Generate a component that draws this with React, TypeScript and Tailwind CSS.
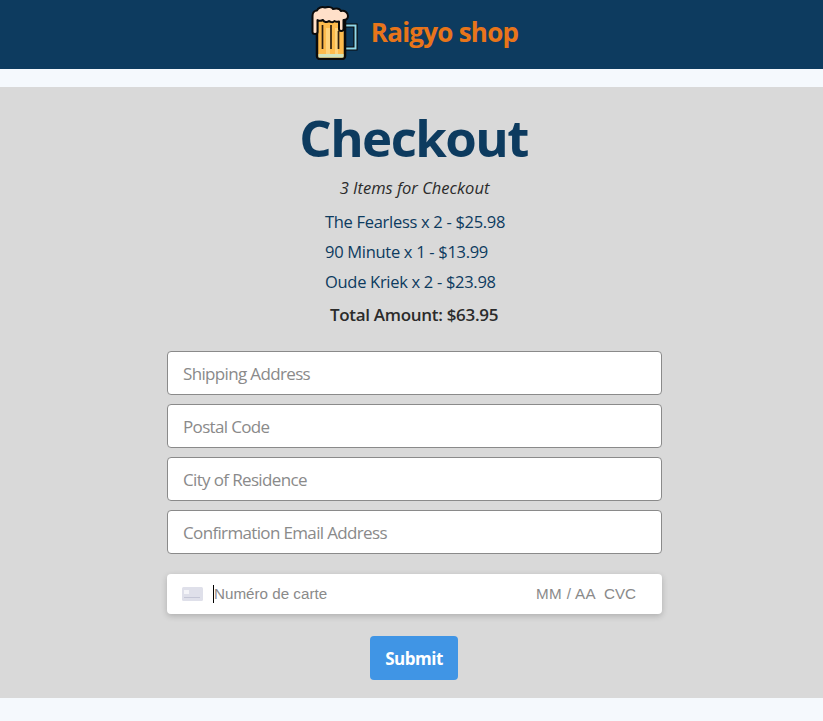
export default function App() {
  const font = "font-['Open_Sans',sans-serif]";
  const fields = ["Shipping Address", "Postal Code", "City of Residence", "Confirmation Email Address"];
  return (
    <div className={`min-h-[721px] bg-[#f5f9fd] ${font}`}>
      <header className="flex h-[69px] items-center justify-center gap-[12px] bg-[#0d3b5f] pl-[6px]">
        <svg width="48" height="54" viewBox="0 0 48 54" className="mt-[-8px] mb-[-4px] shrink-0">
          <path d="M33 19.500h11.500v23H33" fill="none" stroke="#0b0b0b" strokeWidth="4.200" />
          <path d="M33 19.500h11.500v23H33" fill="none" stroke="#8fd8ea" strokeWidth="2" />
          <path d="M6 12h28v38a3 3 0 0 1-3 3H9a3 3 0 0 1-3-3z" fill="#fdbb4d" stroke="#0b0b0b" strokeWidth="2.5" />
          <path d="M15 22h4v26h-4zM24 22h3v26h-3z" fill="#ffd27a" />
          <rect x="7.500" y="48" width="25" height="3.500" fill="#cfe3c0" />
          <path d="M11.500 19v24M20 19v24M27.500 25v18" stroke="#2e1f10" strokeWidth="1.7" />
          <path d="M1.500 26V10C1.500 6 4 4.500 6 4.500C7 1.500 11 .5 14 1.500C17 .5 21 1 22 3C26 2 29 3 30 5C34 4 37 7 37 10C37 13 35 14 32.500 14V23C32.500 25.500 28 25.500 28 23V15.500C26 16 24.500 16 23.500 15C22 17 19 16 18 15C16 17 13 16 12 14C10 15 8 15 6.500 14V26C6.500 28.500 1.500 28.500 1.500 26Z" fill="#ffe0c9" stroke="#0b0b0b" strokeWidth="2" strokeLinejoin="round" />
        </svg>
        <span className="mb-[5px] text-[26px] font-bold tracking-[-0.75px] text-[#e8751a]">Raigyo shop</span>
      </header>
      <main className="mt-[18px] flex h-[611px] flex-col items-center bg-[#d9d9d9] pl-[6px]">
        <h1 className="mt-[16px] mr-[2px] text-[51px] leading-[68px] font-bold tracking-[-1.6px] text-[#0d3b5f]">Checkout</h1>
        <p className="mt-[3px] text-[16.5px] leading-[28px] text-[#2b2b2b] italic">3 Items for Checkout</p>
        <ul className="mt-[5px] w-[179px] text-[16.5px] leading-[30px] tracking-[-0.3px] whitespace-nowrap text-[#0d3b5f]">
          <li>The Fearless x 2 - $25.98</li>
          <li>90 Minute x 1 - $13.99</li>
          <li>Oude Kriek x 2 - $23.98</li>
        </ul>
        <p className="mt-[4px] mr-[1px] text-[17px] leading-[28px] font-semibold tracking-[-0.3px] text-[#2b2b2b]">Total Amount: $63.95</p>
        <form className="mt-[22px] flex w-[495px] flex-col items-center" onSubmit={(e) => e.preventDefault()}>
          <div className="flex w-full flex-col gap-[9px]">
            {fields.map((f) => (
              <input
                key={f}
                placeholder={f}
                className="h-[44px] w-full rounded-[4px] border border-[#8a8a8a] bg-white px-[15px] text-[17px] tracking-[-0.65px] outline-none placeholder:text-[#8a8a8a]"
              />
            ))}
          </div>
          <div className="mt-[20px] flex h-[40px] w-full items-center rounded-[4px] bg-white pr-[26px] pl-[15px] font-['Liberation_Sans',sans-serif] text-[15.2px] text-[#8a8a8a] shadow-[0_2px_6px_rgba(0,0,0,0.2)]">
            <svg width="21" height="14" viewBox="0 0 21 14">
              <rect width="21" height="14" rx="1.5" fill="#dfe0ea" />
              <rect x="2" y="3" width="5" height="4" fill="#f4f4f8" />
              <rect x="2" y="10" width="16" height="1" fill="#c4c6d6" />
            </svg>
            <span className="ml-[10px] h-[18px] w-px bg-black" />
            <span>Numéro de carte</span>
            <span className="ml-auto tracking-[0.35px]">MM / AA</span>
            <span className="ml-[8px]">CVC</span>
          </div>
          <button className="mt-[22px] mr-[1px] h-[44px] w-[88px] rounded-[4px] bg-[#4095e5] pt-[1px] text-[17px] font-bold tracking-[-0.5px] text-white">Submit</button>
        </form>
      </main>
    </div>
  );
}
